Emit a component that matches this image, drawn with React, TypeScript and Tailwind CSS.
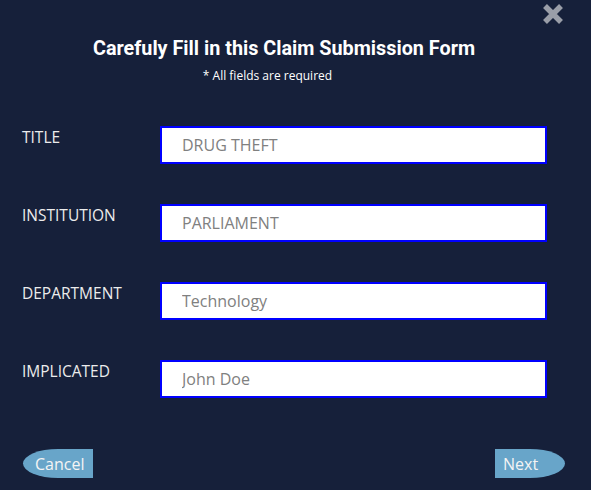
import React from 'react'

const fields = [
  { label: 'TITLE', value: 'DRUG THEFT' },
  { label: 'INSTITUTION', value: 'PARLIAMENT' },
  { label: 'DEPARTMENT', value: 'Technology' },
  { label: 'IMPLICATED', value: 'John Doe' },
]

function CloseIcon() {
  return (
    <svg width="22" height="22" viewBox="0 0 22 22" fill="none">
      <path d="M3 3L19 19M19 3L3 19" stroke="#9a9ea8" strokeWidth="5.5" />
    </svg>
  )
}

export default function App() {
  return (
    <div className="relative w-[591px] h-[490px] overflow-hidden bg-[#16203a] font-['Open_Sans',sans-serif]">
      {/* Close */}
      <button className="absolute right-[27px] top-[3px]" aria-label="Close">
        <CloseIcon />
      </button>

      {/* Header */}
      <div className="pt-[36px] pr-[23px] text-center">
        <h2 className="font-['Roboto',sans-serif] text-[19.8px] leading-[25px] font-bold text-white">
          Carefuly Fill in this Claim Submission Form
        </h2>
      </div>
      <p className="mt-[6px] pr-[56px] text-center text-[12px] leading-[18px] font-medium text-white">
        * All fields are required
      </p>

      {/* Form */}
      <form className="mt-[41px] pl-[22px] grid grid-cols-[138px_387px] gap-y-[40px]">
        {fields.map((f) => (
          <React.Fragment key={f.label}>
            <label className="text-[15.5px] leading-[22px] font-medium text-[#ececec]">
              {f.label}
            </label>
            <input
              readOnly
              value={f.value}
              className="h-[38px] w-[387px] border-2 border-[#0000ff] bg-white pl-[20px] text-[16px] text-[#808080] outline-none"
            />
          </React.Fragment>
        ))}
      </form>

      {/* Actions */}
      <div className="mt-[51px] pl-[23px] pr-[26px] flex justify-between">
        <button className="h-[29px] w-[70px] rounded-l-[50%] bg-[#68a5c9] pl-[12px] text-left text-[16px] leading-none text-[#f4f4f4]">
          Cancel
        </button>
        <button className="h-[29px] w-[70px] rounded-r-[50%] bg-[#68a5c9] pl-[8px] text-left text-[16px] leading-none text-[#f4f4f4]">
          Next
        </button>
      </div>
    </div>
  )
}
